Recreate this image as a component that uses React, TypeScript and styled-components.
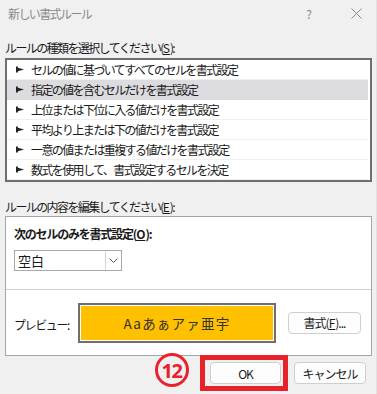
import React from 'react';
import styled, { createGlobalStyle } from 'styled-components';

const GlobalStyle = createGlobalStyle`
  html, body {
    margin: 0;
    padding: 0;
    background: #f0f0f0;
  }
  body {
    font-family: 'Noto Sans CJK JP', 'Noto Sans', sans-serif;
    font-size: 12px;
    color: #1a1a1a;
  }
`;

const Window = styled.div`
  position: relative;
  width: 377px;
  height: 394px;
  background: #f0f0f0;
  box-sizing: border-box;
  border-right: 1px solid #e2e2e2;
  overflow: hidden;
`;

const TitleBar = styled.div`
  display: flex;
  align-items: center;
  height: 26px;
  padding: 0 10px 0 8px;
  color: #8a8a8a;
  letter-spacing: -1.6px;
`;

const Title = styled.div`
  flex: 1;
`;

const TitleButton = styled.div<{ w: number; gap?: number }>`
  width: ${({ w }) => w}px;
  margin-right: ${({ gap }) => gap ?? 0}px;
  display: flex;
  justify-content: center;
  align-items: center;
  color: #8a8a8a;
  letter-spacing: 0;
`;

const Label = styled.div<{ top: number }>`
  margin: ${({ top }) => top}px 0 0 5px;
  height: 16px;
  line-height: 16px;
  letter-spacing: -1.6px;
  u {
    letter-spacing: 0;
  }
`;

const ListBox = styled.div`
  margin: 2px 4px 0 5px;
  height: 124px;
  box-sizing: border-box;
  border: 2px solid #6e6e6e;
  background: #fff;
  padding: 0 2px 0 0;
`;

const Row = styled.div<{ selected?: boolean }>`
  display: flex;
  align-items: center;
  height: 20px;
  box-sizing: border-box;
  padding-left: 9px;
  background: ${({ selected }) => (selected ? '#dcdce0' : '#fff')};
  border-bottom: 1px solid ${({ selected }) => (selected ? '#dcdce0' : '#f0f0f0')};
  letter-spacing: -1.6px;
  svg {
    margin-right: 7px;
    flex: none;
  }
`;

const Panel = styled.div`
  margin: 1px 4px 0 5px;
  height: 140px;
  box-sizing: border-box;
  border: 1px solid #a5a5a5;
  background: #fff;
  display: flex;
  flex-direction: column;
`;

const PanelTop = styled.div`
  height: 73px;
  box-sizing: border-box;
  padding: 9px 0 0 8px;
  border-bottom: 1px solid #cfcfcf;
`;

const BoldLabel = styled.div`
  font-weight: 700;
  height: 16px;
  line-height: 16px;
  letter-spacing: -1.2px;
  u {
    letter-spacing: 0;
  }
`;

const Select = styled.div`
  margin-top: 8px;
  width: 108px;
  height: 21px;
  box-sizing: border-box;
  border: 1px solid #a8a8a8;
  display: flex;
  align-items: center;
  padding-left: 3px;
`;

const SelectText = styled.div`
  flex: 1;
  font-size: 13px;
`;

const SelectArrow = styled.div`
  width: 16px;
  height: 19px;
  box-sizing: border-box;
  border-left: 1px solid #d6d6d6;
  display: flex;
  align-items: center;
  justify-content: center;
`;

const PanelBottom = styled.div`
  flex: 1;
  display: flex;
  align-items: center;
  padding: 0 0 0 8px;
`;

const PreviewLabel = styled.div`
  width: 64px;
  letter-spacing: -1.4px;
  margin-top: 4px;
`;

const PreviewFrame = styled.div`
  margin-top: 1px;
  width: 198px;
  height: 40px;
  box-sizing: border-box;
  border: 2px solid #6e6e6e;
  padding: 1px;
  background: #fff;
`;

const PreviewFill = styled.div`
  height: 100%;
  background: #ffc000;
  display: flex;
  align-items: center;
  justify-content: center;
  font-size: 13.5px;
  letter-spacing: 1.2px;
  color: #333;
`;

const Button = styled.div<{ w: number }>`
  width: ${({ w }) => w}px;
  height: 22px;
  box-sizing: border-box;
  border: 1px solid #cfcfcf;
  border-radius: 4px;
  background: #fdfdfd;
  display: flex;
  align-items: center;
  justify-content: center;
  letter-spacing: -1px;
  u {
    letter-spacing: 0;
  }
`;

const FormatButton = styled(Button)`
  margin: 0 0 0 12px;
`;

const Footer = styled.div`
  display: flex;
  justify-content: flex-end;
  gap: 13px;
  padding: 6px 10px 0 0;
`;

const StepBadge = styled.div`
  position: absolute;
  left: 155px;
  top: 353px;
  width: 34px;
  height: 34px;
  box-sizing: border-box;
  border: 3px solid #e8212b;
  border-radius: 50%;
  color: #e8212b;
  font-family: 'Noto Sans', sans-serif;
  font-weight: 700;
  font-size: 20px;
  letter-spacing: -1.5px;
  display: flex;
  align-items: center;
  justify-content: center;
  padding-right: 1px;
`;

const Highlight = styled.div`
  position: absolute;
  left: 200px;
  top: 355px;
  width: 88px;
  height: 36px;
  box-sizing: border-box;
  border: 5px solid #e8212b;
`;

const Pointer = () => (
  <svg width="8" height="7" viewBox="0 0 8 7">
    <rect x="0" y="0.5" width="1.8" height="6" fill="#222" />
    <polygon points="1,1.5 8,3.5 1,5.5" fill="#222" />
  </svg>
);

const rules = [
  'セルの値に基づいてすべてのセルを書式設定',
  '指定の値を含むセルだけを書式設定',
  '上位または下位に入る値だけを書式設定',
  '平均より上または下の値だけを書式設定',
  '一意の値または重複する値だけを書式設定',
  '数式を使用して、書式設定するセルを決定',
];

export default function App() {
  return (
    <>
      <GlobalStyle />
      <Window>
        <TitleBar>
          <Title>新しい書式ルール</Title>
          <TitleButton w={16} gap={29}>?</TitleButton>
          <TitleButton w={20}>
            <svg width="11" height="11" viewBox="0 0 11 11">
              <path d="M0.5 0.5L10.5 10.5M10.5 0.5L0.5 10.5" stroke="#8a8a8a" strokeWidth="1" />
            </svg>
          </TitleButton>
        </TitleBar>

        <Label top={14}>
          ルールの種類を選択してください(<u>S</u>):
        </Label>
        <ListBox>
          {rules.map((r, i) => (
            <Row key={r} selected={i === 1}>
              <Pointer />
              {r}
            </Row>
          ))}
        </ListBox>

        <Label top={17}>
          ルールの内容を編集してください(<u>E</u>):
        </Label>
        <Panel>
          <PanelTop>
            <BoldLabel>
              次のセルのみを書式設定(<u>O</u>):
            </BoldLabel>
            <Select>
              <SelectText>空白</SelectText>
              <SelectArrow>
                <svg width="9" height="5" viewBox="0 0 9 5">
                  <path d="M0.5 0.5L4.5 4.5L8.5 0.5" stroke="#555" strokeWidth="1" fill="none" />
                </svg>
              </SelectArrow>
            </Select>
          </PanelTop>
          <PanelBottom>
            <PreviewLabel>プレビュー:</PreviewLabel>
            <PreviewFrame>
              <PreviewFill>Aaあぁアァ亜宇</PreviewFill>
            </PreviewFrame>
            <FormatButton w={73}>
              書式(<u>F</u>)...
            </FormatButton>
          </PanelBottom>
        </Panel>

        <Footer>
          <Button w={71}>OK</Button>
          <Button w={72}>キャンセル</Button>
        </Footer>

        <StepBadge>12</StepBadge>
        <Highlight />
      </Window>
    </>
  );
}
